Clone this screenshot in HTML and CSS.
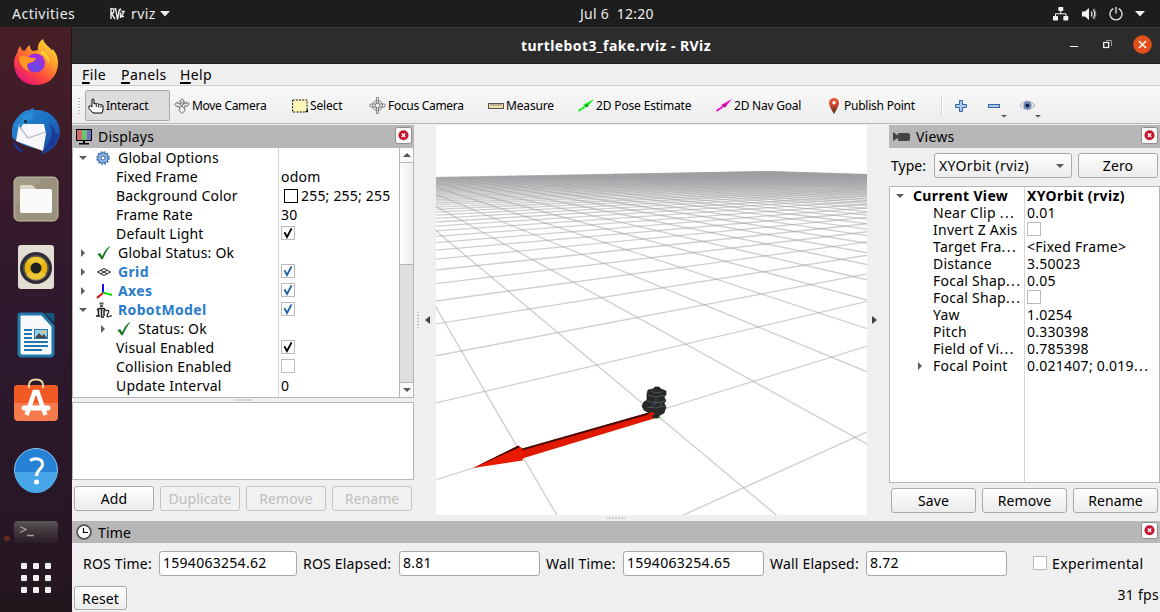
FILE: index.html
```html
<!DOCTYPE html>
<html lang="en">
<head>
<meta charset="utf-8">
<title>turtlebot3_fake.rviz - RViz</title>
<link rel="stylesheet" href="styles.css">
</head>
<body>
<svg class="defs" width="0" height="0">
  <defs>
    <symbol id="close" viewBox="0 0 18 18"><rect x=".5" y=".5" width="16" height="16" rx="2" fill="#f8f8f8" stroke="#8f8f8f"/><circle cx="8.500" cy="8.300" r="5" fill="#c8142f"/><path d="M6.800 6.600l3.400 3.400m0-3.400l-3.400 3.400" stroke="#fff" stroke-width="1.400"/></symbol>
    <symbol id="tick" viewBox="0 0 14 14"><path d="M3.400 6.300l2.600 4.700 4.600-8.600" fill="none" stroke="currentColor" stroke-width="1.800"/></symbol>
    <symbol id="ok" viewBox="0 0 16 16"><path d="M1.200 9.300l3-1.200 2 3.100C8 7 10 3.600 13.500 1.200l.6.5C11 5.200 9 9.300 6.900 14.200H5.300C4 12 2.800 10.500 1.200 9.300z" fill="#1c7a22"/></symbol>
    <symbol id="right" viewBox="0 0 8 8"><path d="M2 0v8l4-4z" fill="#5c5c5c"/></symbol>
    <symbol id="down" viewBox="0 0 8 8"><path d="M0 2h8L4 6z" fill="#5c5c5c"/></symbol>
    <linearGradient id="ff" x1="1" y1="0" x2=".25" y2="1"><stop offset="0" stop-color="#fff044"/><stop offset=".38" stop-color="#ffa02a"/><stop offset=".7" stop-color="#ff4a3c"/><stop offset="1" stop-color="#e5107c"/></linearGradient>
    <radialGradient id="globe" cx=".5" cy=".7"><stop offset="0" stop-color="#5b50e6"/><stop offset="1" stop-color="#a02ce0"/></radialGradient>
    <linearGradient id="tb" x1="0" y1="0" x2="1" y2="1"><stop offset="0" stop-color="#2f8fd8"/><stop offset=".5" stop-color="#1b6fc2"/><stop offset="1" stop-color="#1d3f99"/></linearGradient>
    <linearGradient id="term" x1="0" y1="0" x2="0" y2="1"><stop offset="0" stop-color="#5a5558"/><stop offset=".3" stop-color="#474044"/><stop offset="1" stop-color="#2b1b27"/></linearGradient>
    <linearGradient id="pin" x1="0" y1="0" x2="0" y2="1"><stop offset="0" stop-color="#f0563a"/><stop offset=".5" stop-color="#c0442a"/><stop offset="1" stop-color="#3a2a12"/></linearGradient>
  </defs>
</svg>

<header class="topbar">
  <span class="activities">Activities</span>
  <svg class="rv" width="16" height="16" viewBox="0 0 16 16" fill="none" stroke="#eee" stroke-width="1.400"><path d="M2 13V2.500l3 .5-.5 3.500-2 1L6 13M6.500 2l2 11.500L10.500 3M11.500 6.500V12M11.500 2.500v2M12.500 5.500h2.500l-2.500 5H15"/></svg>
  <span class="app">rviz</span>
  <svg width="10" height="6" viewBox="0 0 10 6"><path d="M0 0h10L5 5.500z" fill="#eee"/></svg>
  <span class="clock">Jul 6&nbsp; 12:20</span>
  <div class="tray">
    <svg width="16" height="14" viewBox="0 0 16 14"><g fill="#f2f2f2"><rect x="5.300" width="5" height="4" rx=".7"/><rect y="9" width="5" height="4.500" rx=".7"/><rect x="10.300" y="9" width="5" height="4.500" rx=".7"/></g><path d="M7.800 4v3M2.500 9V6.800h10.500V9" stroke="#f2f2f2" fill="none"/></svg>
    <svg width="16" height="14" viewBox="0 0 16 14"><path d="M1 4.500h3L8 1v12L4 9.500H1z" fill="#f2f2f2"/><path d="M10 4.500q2 2.500 0 5M12 2.500q3.500 4.500 0 9" fill="none" stroke="#f2f2f2" stroke-width="1.200"/><path d="M13.500 1.500q3 5.500 0 11" fill="none" stroke="#999" stroke-width=".8"/></svg>
    <svg width="14" height="14" viewBox="0 0 14 14"><path d="M4.300 1.600a6 6 0 1 0 5.400 0M7 0v6.500" fill="none" stroke="#e8e8e8" stroke-width="1.300"/></svg>
    <svg width="10" height="6" viewBox="0 0 10 6"><path d="M0 0h10L5 5.500z" fill="#eee"/></svg>
  </div>
</header>

<div class="desktop">
<nav class="dock">
  <div class="slot first"><svg width="48" height="48" viewBox="0 0 48 48"><path d="M24 47C11 47 2 38 2 24.500c0-4 1.500-7.500 3.500-10 0-2 1-5 3-6.500.2 2 1 3.500 2 4.500l3 0C14 10 16 8 18 7c-.3 2.500.5 5 3 6l5-1C25 7 28 3 31 1c1 4 4 6.500 7 9 1 1 1.500 2 2 2.500l.5-1.500c4 4 5.500 9 5.500 13.500C46 38 37 47 24 47z" fill="url(#ff)"/><circle cx="23.500" cy="25" r="9.500" fill="url(#globe)"/><path d="M7 19c5-2 9-1 12 1l5 0c-1 4-5 4.500-7 5-3 2-2 6 1 8-7-1-11-7-11-14z" fill="#ff9722"/><path d="M29 12c6 3 9 8 8 14-2-6-4-9-8-10z" fill="#ffd43a"/></svg></div>
  <div class="slot"><svg width="48" height="48" viewBox="0 0 48 48"><path d="M3 14C8 6 13 3 18 3c2-2 3-2 4-2l-1 2c14-1 27 7 27 23-1 10-8 19-19 21l4-5C15 42 2 34 0 30c-1-8 1-14 3-16z" fill="url(#tb)"/><path d="M2 35q7 8 12 12l-7-3C3 41 1 36 2 35zM37 16q9 12-9 31 18-6 19-22l-3 3q-2-9-7-12z" fill="#1a3a98"/><path d="M7 17l25 0 2 10-3 17L4 34z" fill="#f7f7fa"/><path d="M7 19l9 12 18-6" fill="none" stroke="#b5bac5" stroke-width="1.300"/><path d="M7 19Q10 6 22 4l-2 8-8 3-3 6z" fill="#2a8cd4"/><circle cx="13.500" cy="14.500" r="1.400" fill="#123"/></svg></div>
  <div class="slot"><svg width="46" height="46" viewBox="0 0 46 46"><rect x="1" y="1" width="44" height="44" rx="5" fill="#a49c87" stroke="#c0b9a5"/><path d="M2 30L30 2h10q4 0 4 4v36q0 2-2 2H6q-4 0-4-4z" fill="#958c77" opacity=".6"/><path d="M7 11q0-2 2-2h10l4 4v6H7z" fill="#ddd7c8"/><rect x="7" y="13" width="32" height="24" rx="2" fill="#fafafa"/></svg></div>
  <div class="slot"><svg width="38" height="46" viewBox="0 0 38 46"><rect x="1" y="1" width="36" height="44" rx="3" fill="#e2ded3"/><circle cx="19" cy="24" r="16" fill="#2c2d39"/><circle cx="19" cy="24" r="12" fill="#e9b610" stroke="#5c5849" stroke-width="1.500"/><path d="M10 17a12 12 0 0 1 18 0l-9 7zM9 31a12 12 0 0 0 20 0l-10-7z" fill="#f4d34e" opacity=".6"/><circle cx="19" cy="24" r="5.500" fill="#222"/></svg></div>
  <div class="slot"><svg width="38" height="46" viewBox="0 0 38 46"><path d="M4 2h21l11 12v27q0 3-3 3H5q-3 0-3-3V4q0-2 2-2z" fill="#f7f9fa" stroke="#2179ab" stroke-width="3"/><path d="M27 1h9q1.500 0 1.500 2v8z" fill="#12567f"/><path d="M7 18h8M7 22h8M7 26h8M7 30h24M7 34h24M7 38h18" stroke="#2377aa" stroke-width="2"/><rect x="17.500" y="17.500" width="13" height="9" fill="#9ccde9" stroke="#2377aa"/><path d="M18 26l4-5 3 3 2-2 3 4z" fill="#444"/><circle cx="27" cy="20" r="1.500" fill="#f5cc30"/></svg></div>
  <div class="slot store"><svg width="46" height="46" viewBox="0 0 46 46"><rect x="1" y="8" width="44" height="36" rx="4" fill="#f57b4d"/><path d="M1 26V12q0-4 4-4h36q4 0 4 4v14z" fill="#f15a24"/><path d="M16 11V8q0-5.500 7-5.500T30 8v3" fill="none" stroke="#ecd8a0" stroke-width="2"/><path d="M13.500 38L21.500 15h3l8 23" fill="none" stroke="#fff" stroke-width="4.500"/><path d="M11 31h24" stroke="#fff" stroke-width="5" stroke-linecap="round"/></svg></div>
  <div class="slot help-slot"><svg width="46" height="46" viewBox="0 0 46 46"><circle cx="23" cy="23" r="21.500" fill="#2582d5" stroke="#8fc7f1"/><path d="M2 25h42a21 21 0 0 1-42 0z" fill="#46a6e8"/><path d="M17 13.500q4-2.500 8-1.500 5 1 4.500 6c-.5 4-6 5-6 11" fill="none" stroke="#fff" stroke-width="3"/><circle cx="23.500" cy="35" r="2.500" fill="#fff"/></svg></div>
  <div class="terminal"><svg width="72" height="23" viewBox="0 0 72 23"><path d="M14 23V5q0-4 4-4h36q4 0 4 4v18z" fill="url(#term)"/><path d="M20 6.500l6 3-6 3M27 15.500h7" fill="none" stroke="#a6a0a3" stroke-width="1.300"/><circle cx="7" cy="18.500" r="2.800" fill="#6b2924"/></svg></div>
  <div class="launcher"><i></i><i></i><i></i><i></i><i></i><i></i><i></i><i></i><i></i></div>
</nav>

<main class="window">
  <div class="titlebar"><b>turtlebot3_fake.rviz - RViz</b>
    <div class="controls">
      <svg class="min" width="8" height="2"><path d="M0 .5h8" stroke="#fff" stroke-width="1"/></svg>
      <svg class="max" width="9" height="9" viewBox="0 0 9 9" fill="none"><path d="M3 .5h5.500V6" stroke="#999"/><rect x=".7" y="2.500" width="5" height="5" stroke="#fff" stroke-width="1.200"/></svg>
      <svg width="19" height="19" viewBox="0 0 19 19"><circle cx="9.500" cy="9.500" r="9.300" fill="#e3501b"/><path d="M6 6l7 7m0-7l-7 7" stroke="#fff" stroke-width="1.500"/></svg>
    </div>
  </div>
  <div class="menubar"><span class="m-file"><u>F</u>ile</span><span class="m-panels"><u>P</u>anels</span><span class="m-help"><u>H</u>elp</span></div>
  <div class="toolbar">
    <div class="grip"></div>
    <div class="tool active t1"><svg width="16" height="16" viewBox="0 0 16 16"><path d="M4 1.500q1-1.500 2 0V6q1-1 2 0 1.500-1 2.500.500 1.500-1 2.300.4 2-.6 2.200 1V12l-1 3H5L1 10.500V8q1.500-1 3 1z" fill="#fff" stroke="#000"/><path d="M8.300 6.500V9M10.700 7v2.500M13 7.500v2" stroke="#000" stroke-width=".9"/></svg><span>Interact</span></div>
    <div class="tool t2"><svg width="16" height="16" viewBox="0 0 16 16" fill="#eee" stroke="#666" stroke-width=".9"><path d="M8 .5l2.500 3H9V6l3.500-.5V4l3 2-3 2.500V7.500L10 9l1 3.500-3 3-3-3L6 9 3.500 8v1L.5 6.500l3-2.500v1.500L7 6V3.500H5.500z"/><path d="M5 5l6 6M11 4l-6 7" fill="none"/></svg><span>Move Camera</span></div>
    <div class="tool t3"><svg width="16" height="14" viewBox="0 0 16 14"><rect x=".6" y="1" width="14.500" height="12" fill="#fff7b8" stroke="#111" stroke-dasharray="2 1.200"/><path d="M13 13h3v-3z"/></svg><span>Select</span></div>
    <div class="tool t4"><svg width="17" height="17" viewBox="0 0 17 17" fill="none" stroke="#777"><circle cx="8.500" cy="8.500" r="5"/><circle cx="8.500" cy="8.500" r="2.500"/><path d="M7.500.5h2V7H16v3H9.500v6.500h-2V10H1V7h6.500z" stroke-width=".8"/></svg><span>Focus Camera</span></div>
    <div class="tool t5"><svg width="16" height="6" viewBox="0 0 16 6"><rect x=".5" y=".5" width="15" height="5" fill="#eee0a8" stroke="#555"/><path d="M3 1v2M5 1v2M7 1v2M9 1v2M11 1v2M13 1v2" stroke="#777" stroke-width=".8"/></svg><span>Measure</span></div>
    <div class="tool t6"><svg width="16" height="13" viewBox="0 0 16 13"><path d="M.5 12L7 7.500" stroke="#10ee20" stroke-width="2"/><path d="M5 6L16 0 9 8.500z" fill="#10ee20"/><path d="M7.500 6l2 1.500" stroke="#087015" stroke-width="1.800"/></svg><span>2D Pose Estimate</span></div>
    <div class="tool t7"><svg width="16" height="13" viewBox="0 0 16 13"><path d="M.5 12L7 7.500" stroke="#f010d0" stroke-width="2"/><path d="M5 6L16 0 9 8.500z" fill="#f010d0"/><path d="M7.500 6l2 1.500" stroke="#800870" stroke-width="1.800"/></svg><span>2D Nav Goal</span></div>
    <div class="tool t8"><svg width="16" height="16" viewBox="0 0 16 16"><path d="M8 16Q3 8 3 5a5 5 0 0 1 10 0q0 3-5 11z" fill="url(#pin)"/><circle cx="8" cy="4.800" r="1.700" fill="#fff"/></svg><span>Publish Point</span></div>
    <div class="sep"></div>
    <svg class="plus" width="14" height="14" viewBox="0 0 14 14"><path d="M5.500 1.500h3v4h4v3h-4v4h-3v-4h-4v-3h4z" fill="#a9c8ea" stroke="#3465a4"/></svg>
    <svg class="minus" width="19" height="24" viewBox="0 0 19 24"><rect x=".5" y="10.500" width="11" height="3" fill="#a9c8ea" stroke="#3465a4"/><path d="M13 21h6l-3 2.500z" fill="#555"/></svg>
    <svg class="eye" width="24" height="24" viewBox="0 0 24 24"><path d="M1 11.500Q8 2.500 16 11.500 8 19.500 1 11.500z" fill="#eee" stroke="#aaa"/><circle cx="8.500" cy="11.500" r="4" fill="#6a82c0"/><circle cx="8.500" cy="11.500" r="1.800" fill="#101830"/><path d="M16 21h6l-3 2.500z" fill="#555"/></svg>
  </div>

  <div class="work">
    <section class="displays">
      <div class="head"><svg width="16" height="17" viewBox="0 0 16 17"><path d="M0 1h16v12H0z"/><path d="M1 2h5v10H1z" fill="#cb6b6b"/><path d="M6 2h5v10H6z" fill="#6bc46b"/><path d="M11 2h4v10h-4z" fill="#746bc4"/><path d="M7 13h2v2h4v1.500H3V15h4z"/></svg><span>Displays</span><svg class="x" width="18" height="18"><use href="#close"/></svg></div>
      <div class="tree">
        <div class="rows" id="displays"></div>
        <div class="scroll"><div class="btn-up"><svg width="8" height="8"><path d="M0 6h8L4 2z" fill="#555"/></svg></div><div class="thumb"></div><div class="trough"></div><div class="btn-up"><svg width="8" height="8"><use href="#down"/></svg></div></div>
      </div>
      <div class="hgrip"></div>
      <div class="help"></div>
      <div class="buttons"><button>Add</button><button disabled>Duplicate</button><button disabled>Remove</button><button disabled>Rename</button></div>
    </section>
    <div class="split left"><i></i><svg width="5" height="8"><path d="M5 0v8L0 4z" fill="#444"/></svg></div>
    <div class="view"><canvas id="scene" width="431" height="390"></canvas>
      <svg class="robot" width="431" height="390" viewBox="0 0 431 390">
        <path d="M218 286L82 325l1 9.500 135-41z" fill="#e01800"/><path d="M218 286L86 323.500v2l132-37.500z" fill="#2c0500" opacity=".85"/>
        <path d="M37 343l45.500-22.500 4 3 .3 12z" fill="#e81b00"/><path d="M37 343l45.500-22.500.8 2z" fill="#350500"/>
        <g fill="#272828" stroke="#151515" stroke-width=".7"><path d="M211 269l1-4 5-1 2-2h4l2 2 5 2v4l-2 2 2 4-2 2 2 4-2 6-4 2-2 3h-4l-5-5-5-3-2-4 2-4 3-2z"/></g>
        <path d="M212 270l8 2 10-2M211 276l9 2 9-2M211 282l9 1 9-2M215 266l4 2 7-1M220 272v6l-6 5M226 277l-2 5" fill="none" stroke="#5c5f60" stroke-width=".8"/><path d="M217 279h2" stroke="#2030d0"/><path d="M223 292l1 1" stroke="#24b524" stroke-width="1.200"/>
        <path d="M218 287l-5 1-2 4 7-2z" fill="#d81800"/>
      </svg>
    </div>
    <div class="split right"><svg width="5" height="8"><path d="M0 0v8l5-4z" fill="#444"/></svg><i></i></div>
    <section class="views">
      <div class="head"><svg width="17" height="10" viewBox="0 0 17 10"><path d="M0 0l5 3.500V2q0-1 1-1h9q2 0 2 2v4q0 2-2 2H6Q5 9 5 8V6L0 9z" fill="#444"/></svg><span>Views</span><svg class="x" width="18" height="18"><use href="#close"/></svg></div>
      <div class="type"><label>Type:</label><div class="combo"><span>XYOrbit (rviz)</span><svg width="8" height="8"><use href="#down"/></svg></div><button>Zero</button></div>
      <div class="vtree" id="views"></div>
      <div class="buttons"><button>Save</button><button>Remove</button><button>Rename</button></div>
    </section>
  </div>

  <div class="bgrip"></div>
  <section class="time">
    <div class="head"><svg width="16" height="16" viewBox="0 0 16 16"><circle cx="8" cy="8" r="6.900" fill="#fff" stroke="#555" stroke-width="1.800"/><path d="M7.500 4v4.500H12" fill="none" stroke="#000" stroke-width="1.200"/></svg><span>Time</span><svg class="x" width="18" height="18"><use href="#close"/></svg></div>
    <div class="fields">
      <label class="l1">ROS Time:</label><div class="field f1">1594063254.62</div>
      <label class="l2">ROS Elapsed:</label><div class="field f2">8.81</div>
      <label class="l3">Wall Time:</label><div class="field f3">1594063254.65</div>
      <label class="l4">Wall Elapsed:</label><div class="field f4">8.72</div>
      <span class="box"></span><label class="l5">Experimental</label>
    </div>
    <div class="foot"><button>Reset</button><span>31 fps</span></div>
  </section>
</main>
</div>
<script src="app.js"></script>
</body>
</html>
```

FILE: styles.css
```css
* { box-sizing: border-box; }
body { margin: 0; width: 1160px; height: 612px; overflow: hidden; font: 14px/19px "Noto Sans", sans-serif; letter-spacing: .2px; color: #000; background: #efefef; }
svg { display: block; flex: none; }
span, label { white-space: nowrap; }
b, .link { letter-spacing: .36px; }
.defs { position: absolute; }
.topbar { position: relative; height: 27px; background: #1d1d1d; color: #ececec; display: flex; align-items: center; padding-left: 12px; }
.activities { width: 97px; letter-spacing: .5px; }
.app { margin: 0 5px 0 6px; letter-spacing: .4px; width: 24px; }
.clock { position: absolute; left: 580px; letter-spacing: .25px; }
.tray { margin-left: auto; padding-right: 15px; display: flex; align-items: center; gap: 12px; }
.desktop { display: flex; height: 585px; }
.dock { width: 72px; padding-top: 2px; background: linear-gradient(#471f26, #371a2b 28%, #2e192e 50%, #281727 80%, #24161d); border-right: 1px solid #24151f; }
.slot { height: 68px; display: flex; align-items: center; justify-content: center; }
.first { padding-bottom: 2px; }
.store { padding-bottom: 6px; }
.help-slot { padding-bottom: 2px; }
.terminal { height: 58px; padding-top: 15px; }
.launcher { display: grid; grid-template-columns: repeat(3, 6px); gap: 6px; padding: 0 0 0 21px; }
.launcher i { width: 6px; height: 6px; border-radius: 1px; background: #f2f0f1; }
.window { width: 1088px; }
.titlebar { position: relative; height: 37px; background: #2c2c2c; border-top: 1px solid #3b3b3b; border-bottom: 1px solid #1e1e1e; color: #fff; display: flex; justify-content: center; align-items: center; }
.titlebar b { letter-spacing: .42px; }
.controls { position: absolute; right: 8px; top: 7px; display: flex; align-items: center; gap: 24px; }
.max { margin-right: -3px; margin-left: 1px; }
.min { margin-top: 5px; }
.menubar { height: 22px; display: flex; align-items: center; padding-left: 10px; border-bottom: 1px solid #d0d0d0; letter-spacing: .4px; }
.menubar u { text-underline-offset: 2px; text-decoration-thickness: 1.500px; }
.m-file { width: 39px; }
.m-panels { width: 59px; }
.toolbar { height: 38px; padding-top: 2px; border-bottom: 1px solid #b6b6b6; background: linear-gradient(#f8f8f8, #ededed); display: flex; align-items: center; font-size: 12px; letter-spacing: -.23px; }
.grip { width: 5px; height: 17px; margin: 0 3px 0 5px; background: radial-gradient(circle, #bbb .7px, transparent 1px) 0 0 / 4px 3px; }
.tool { display: flex; align-items: center; gap: 2px; height: 31px; padding-left: 3px; }
.active { background: #dcdcdc; border: 1px solid #aaa; border-radius: 2px; padding-left: 2px; }
.t1 { width: 85px; } .t2 { width: 119px; padding-left: 4px; } .t3 { width: 77px; } .t4 { width: 119px; } .t5 { width: 90px; } .t6 { width: 138px; } .t7 { width: 110px; } .t8 { width: 118px; }
.t2, .t4 { letter-spacing: -.3px; }
.t5, .t6, .t3 { letter-spacing: -.15px; }
.sep { width: 2px; height: 19px; background: #d5d5d5; border-right: 1px solid #fff; margin-right: 11px; }
.minus { margin: 0 12px 0 20px; }
.work { display: flex; height: 391px; padding-top: 1px; }
.head { display: flex; align-items: center; height: 23px; background: #b7b7b7; padding-left: 4px; gap: 6px; }
.x { margin: -2px 1px 0 auto; }
.displays { width: 342px; }
.tree { height: 250px; display: flex; background: #fff; border: solid #b7b7b7; border-width: 0 1px 1px; }
.rows { width: 326px; background: linear-gradient(#d5d5d5, #d5d5d5) 205px 0 / 1px 100% no-repeat; overflow: hidden; }
.row { height: 19px; display: flex; align-items: center; }
.name { display: flex; align-items: center; width: 208px; }
.name svg { margin-right: 6px; }
.name .arrow { width: 8px; margin-right: 9px; }
.blank { width: 43px; flex: none; }
.link { color: #2a7bcb; font-weight: bold; }
.box { width: 14px; height: 14px; background: #fff; border: 1px solid #b9b9b9; display: block; flex: none; }
.rows .box { margin-top: -1px; }
.box svg { margin: -1px; }
.blue { color: #1f62a8; }
.swatch { width: 14px; height: 14px; border: 1px solid #000; margin: 0 3px 0 3px; }
.scroll { width: 14px; display: flex; flex-direction: column; border-left: 1px solid #b7b7b7; }
.btn-up { height: 14px; display: flex; align-items: center; justify-content: center; background: #fbfbfb; }
.thumb { height: 103px; background: linear-gradient(90deg, #fcfcfc, #eee); border: solid #b7b7b7; border-width: 1px 0; }
.trough { flex: 1; background: #dedede; border-bottom: 1px solid #b7b7b7; }
.hgrip, .bgrip { height: 4px; background: radial-gradient(circle, #aaa .7px, transparent 1px) center / 3px 4px repeat-x; width: 18px; margin: 0 auto; }
.bgrip { height: 6px; }
.help { height: 78px; background: #fff; border: 1px solid #b7b7b7; }
.buttons { display: flex; gap: 6px; padding: 6px 2px 0; }
button { font: inherit; letter-spacing: .1px; height: 25px; padding: 0; flex: 1; border: 1px solid #aaa; border-radius: 3px; background: linear-gradient(#fefefe, #ececec); color: #000; }
button:disabled { color: #bdbdbd; border-color: #c5c5c5; background: #f1f1f1; }
.split { width: 22px; display: flex; align-items: center; }
.split i { width: 2px; height: 17px; background: repeating-linear-gradient(#bbb 0 1px, transparent 1px 3px); margin: 0 3px; }
.split.left svg { margin-left: 3px; }
.split.right svg { margin: 0 6px 0 5px; }
.view { position: relative; width: 431px; height: 390px; background: #fff; }
.view canvas { display: block; }
.robot { position: absolute; left: 0; top: 0; }
.views { width: 271px; }
.type { display: flex; align-items: center; height: 38px; padding: 0 2px 3px; }
.type label { width: 43px; letter-spacing: 0; }
.type button { flex: none; width: 80px; margin-left: 6px; }
.combo { width: 138px; height: 25px; display: flex; align-items: center; justify-content: space-between; padding: 0 7px 0 4px; border: 1px solid #aaa; border-radius: 3px; background: linear-gradient(#fefefe, #ececec); letter-spacing: .36px; }
.vtree { height: 297px; border: 1px solid #b7b7b7; background: linear-gradient(#d5d5d5, #d5d5d5) 134px 0 / 1px 100% no-repeat #fff; letter-spacing: .26px; }
.vtree .row { height: 17px; line-height: 17px; }
.vtree .name { width: 137px; }
.vtree .box { margin-top: -1px; }
.dots { letter-spacing: 1.400px; }
.views .buttons { padding-top: 5px; }
.time .head { height: 22px; }
.fields { display: flex; align-items: center; height: 40px; padding-left: 11px; }
.l1 { width: 76px; } .l2 { width: 96px; } .l3 { width: 77px; } .l4 { width: 96px; }
.field { height: 25px; line-height: 22px; background: #fff; border: 1px solid #a8a8a8; border-radius: 3px; padding-left: 3px; letter-spacing: .28px; }
.f1 { width: 138px; margin-right: 6px; } .f2 { width: 141px; margin-right: 6px; } .f3 { width: 141px; margin-right: 6px; } .f4 { width: 141px; }
.fields .box { margin: 0 5px 0 26px; }
.l5 { letter-spacing: .35px; }
.foot { display: flex; justify-content: space-between; padding: 3px 1px 0 2px; }
.foot button { flex: none; width: 53px; height: 24px; }
.foot span { margin-top: -1px; letter-spacing: .3px; }
```

FILE: app.js
```js
const gear = '<svg width="14" height="14" viewBox="0 0 14 14"><circle cx="7" cy="7" r="5.200" fill="#8fb6e2" stroke="#3465a4"/><circle cx="7" cy="7" r="6" fill="none" stroke="#3d70b2" stroke-width="1.600" stroke-dasharray="1.700 1.440"/><circle cx="7" cy="7" r="2" fill="#fff" stroke="#3465a4"/></svg>';
const grid = '<svg width="14" height="14" viewBox="0 0 14 14" fill="none" stroke="#222" stroke-width="1"><path d="M.5 7L7 3.500 13.500 7 7 10.500zM3.700 5.300L10.200 8.800M3.700 8.800l6.500-3.500"/></svg>';
const axes = '<svg width="16" height="16" viewBox="0 0 16 16" stroke-width="2" fill="none"><path d="M7 10V1" stroke="#1010f0"/><path d="M7 10L1 15" stroke="#e01010"/><path d="M7 9.500l9 2.500" stroke="#10e010"/></svg>';
const robot = '<svg width="16" height="16" viewBox="0 0 16 16" fill="none" stroke="#222"><path d="M3.500 1.500h4" stroke="#456" stroke-width="2"/><path d="M4 4h3" stroke-width="1.500"/><path d="M1 8l2-1.500h5l1.500 2" stroke-width="1.600"/><path d="M2.500 8v6M5.500 7v8M8 8v6M0 14h4M5 15h3" stroke-width="1.500"/><path d="M9.500 9q4-2 3 1.500l-1.500 3q0 2 2 1l3-1" stroke-width="1.300"/></svg>';
const use = (id, size, cls = '') => `<svg class="${cls}" width="${size}" height="${size}"><use href="#${id}"/></svg>`;
const box = (on, cls = '') => `<span class="box ${cls}">${on ? use('tick', 14) : ''}</span>`;
const group = (dir, icon, text, cls = '') => `${use(dir, 8, 'arrow')}${icon}<span class="${cls}">${text}</span>`;
const leaf = t => `<i class="blank"></i><span>${t}</span>`;
const pad = n => `<i style="width:${n}px"></i>`;
const dots = '<span class="dots">...</span>';
const row = ([name, value]) => `<div class="row"><div class="name">${name}</div>${value}</div>`;

document.getElementById('displays').innerHTML = [
  [pad(6) + group('down', pad(0) + gear + pad(2), 'Global Options'), ''],
  [leaf('Fixed Frame'), '<span>odom</span>'],
  [leaf('Background Color'), '<i class="swatch"></i><span>255; 255; 255</span>'],
  [leaf('Frame Rate'), '<span>30</span>'],
  [leaf('Default Light'), box(true)],
  [pad(6) + group('right', use('ok', 16), 'Global Status: Ok'), ''],
  [pad(6) + group('right', pad(1) + grid + pad(1), 'Grid', 'link'), box(true, 'blue')],
  [pad(6) + group('right', axes, 'Axes', 'link'), box(true, 'blue')],
  [pad(6) + group('down', robot, 'RobotModel', 'link'), box(true, 'blue')],
  [pad(26) + group('right', use('ok', 16), 'Status: Ok'), ''],
  [leaf('Visual Enabled'), box(true)],
  [leaf('Collision Enabled'), box(false)],
  [leaf('Update Interval'), '<span>0</span>']
].map(row).join('');

document.getElementById('views').innerHTML = [
  [pad(6) + group('down', '', '<b>Current View</b>'), '<b>XYOrbit (rviz)</b>'],
  [leaf('Near Clip ' + dots), '0.01'],
  [leaf('Invert Z Axis'), box(false)],
  [leaf('Target Fra' + dots), '&lt;Fixed Frame&gt;'],
  [leaf('Distance'), '3.50023'],
  [leaf('Focal Shap' + dots), '0.05'],
  [leaf('Focal Shap' + dots), box(false)],
  [leaf('Yaw'), '1.0254'],
  [leaf('Pitch'), '0.330398'],
  [leaf('Field of Vi' + dots), '0.785398'],
  [pad(26) + group('right', '', 'Focal Point'), '<span>0.021407; 0.019' + dots + '</span>']
].map(row).join('');

// Ground plane: each grid direction converges on its own vanishing point.
const ctx = document.getElementById('scene').getContext('2d');
const origin = [217.3, 287.3], vx = [1035, 34], vy = [-86, 34];
const wx = 0.1394, wy = 0.2295, half = 52;
const project = (a, b) => {
  const p = a * wx, q = b * wy, s = 1 + p + q;
  return [0, 1].map(i => (origin[i] + p * vx[i] + q * vy[i]) / s);
};
ctx.strokeStyle = 'rgba(160,160,164,.5)';
ctx.lineWidth = 1.35;
const line = (p, q) => {
  ctx.beginPath();
  ctx.moveTo(...p);
  ctx.lineTo(...q);
  ctx.stroke();
};
for (let k = -half; k <= half; k++) {
  const a0 = Math.max(-half, (-0.9 - k * wy) / wx);
  if (a0 < half) line(project(a0, k), project(half, k));
  const b0 = Math.max(-half, (-0.9 - k * wx) / wy);
  if (b0 < half) line(project(k, b0), project(k, half));
}
```
